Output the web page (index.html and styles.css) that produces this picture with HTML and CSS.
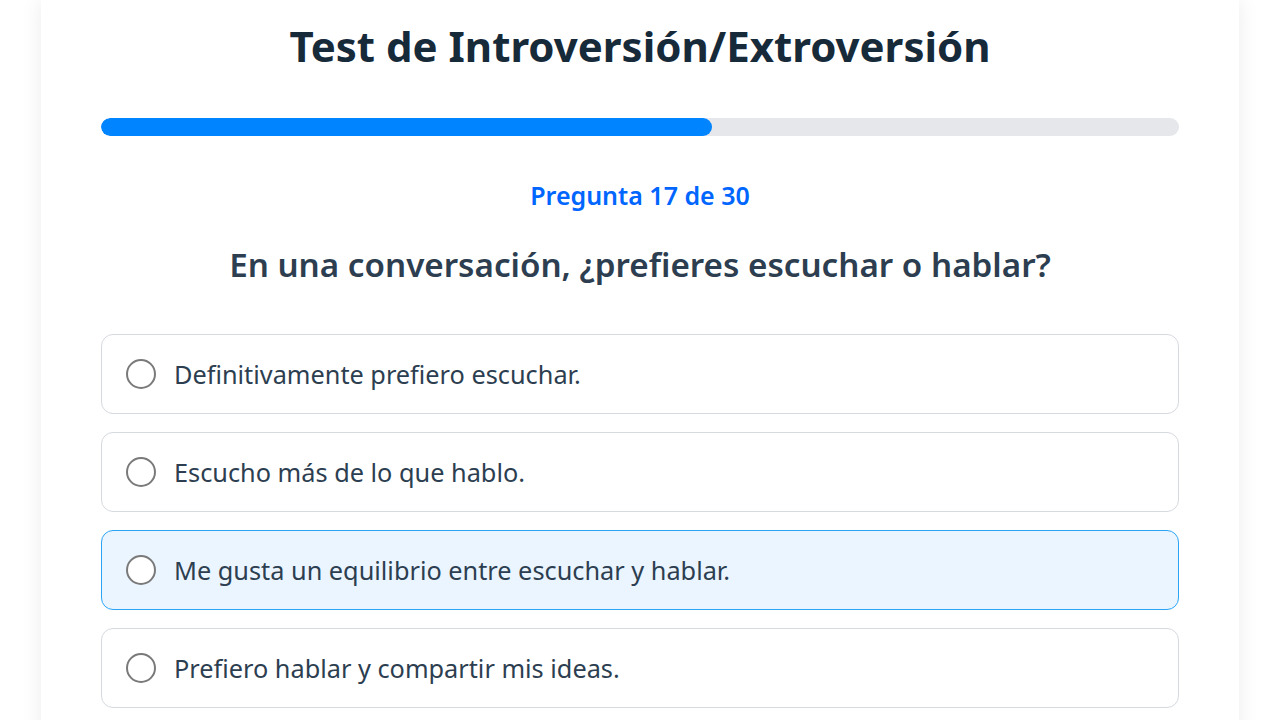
FILE: index.html
```html
<!DOCTYPE html>
<html lang="es">
<head>
<meta charset="utf-8">
<title>Test de Introversión/Extroversión</title>
<link rel="stylesheet" href="styles.css">
</head>
<body>
<main class="card">
  <h1 class="title">Test de Introversión/Extroversión</h1>
  <div class="progress"><div class="progress-fill" style="width: 56.67%"></div></div>
  <p class="counter">Pregunta 17 de 30</p>
  <h2 class="question">En una conversación, ¿prefieres escuchar o hablar?</h2>
  <ul class="options">
    <li class="option"><span class="radio"></span><span class="option-text">Definitivamente prefiero escuchar.</span></li>
    <li class="option"><span class="radio"></span><span class="option-text">Escucho más de lo que hablo.</span></li>
    <li class="option option-active"><span class="radio"></span><span class="option-text">Me gusta un equilibrio entre escuchar y hablar.</span></li>
    <li class="option"><span class="radio"></span><span class="option-text">Prefiero hablar y compartir mis ideas.</span></li>
  </ul>
</main>
</body>
</html>
```

FILE: styles.css
```css
* { box-sizing: border-box; }
html, body { margin: 0; padding: 0; background: #ffffff; }
body {
  font-family: "Noto Sans", "Open Sans", "DejaVu Sans", sans-serif;
  color: #2c3e50;
  overflow: hidden;
}
.card {
  width: 1198px;
  margin: 0 auto;
  padding: 20px 60px 40px;
  background: #ffffff;
  box-shadow: 0 0 20px rgba(0, 0, 0, 0.08);
  min-height: 800px;
}
.title {
  margin: 0;
  font-size: 42px;
  line-height: 52px;
  font-weight: 700;
  text-align: center;
  color: #172a3a;
}
.progress {
  margin-top: 46px;
  height: 18px;
  border-radius: 9px;
  background: #e5e7eb;
  overflow: hidden;
}
.progress-fill {
  height: 100%;
  background: #0084ff;
  border-radius: 9px;
}
.counter {
  margin: 43px 0 0;
  font-size: 25px;
  line-height: 32px;
  font-weight: 600;
  text-align: center;
  color: #0066ff;
}
.question {
  margin: 32px 0 0;
  font-size: 33.2px;
  line-height: 44px;
  font-weight: 600;
  text-align: center;
  color: #2c3e50;
}
.options {
  list-style: none;
  margin: 47px 0 0;
  padding: 0;
  display: flex;
  flex-direction: column;
  gap: 18px;
}
.option {
  height: 80px;
  display: flex;
  align-items: center;
  gap: 18px;
  padding: 0 24px;
  border: 1px solid #d6d9de;
  border-radius: 12px;
  background: #ffffff;
}
.option-active {
  background: #ebf5ff;
  border-color: #2aa5f5;
}
.radio {
  flex: none;
  width: 30px;
  height: 30px;
  border: 2px solid #7a7a7a;
  border-radius: 50%;
  background: #ffffff;
}
.option-text {
  font-size: 25.3px;
  color: #2c3e50;
}
```
